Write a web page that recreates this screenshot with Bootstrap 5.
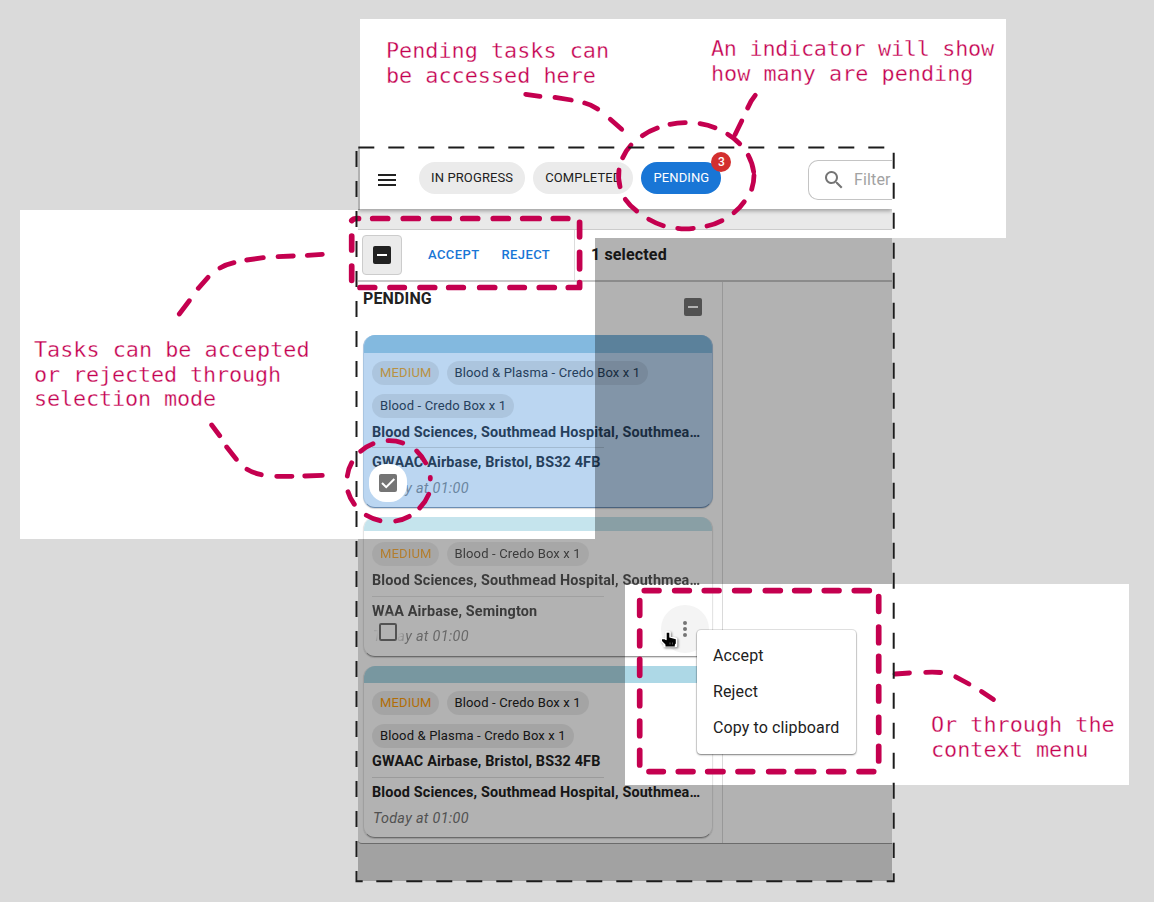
<!DOCTYPE html>
<html lang="en">
<head>
<meta charset="utf-8">
<title>Pending tasks guide</title>
<link rel="stylesheet" href="https://cdn.jsdelivr.net/npm/bootstrap@5.3.0/dist/css/bootstrap.min.css">
<style>
  body { margin: 0; background: #dadada; font-family: Roboto, sans-serif; color: #212121; overflow: hidden; }
  .canvas { width: 1154px; height: 902px; }
  .spot { position: absolute; background: #fff; }
  .spot-top { left: 360px; top: 19px; width: 646px; height: 219px; }
  .spot-left { left: 20px; top: 210px; width: 575px; height: 329px; }
  .spot-menu { left: 625px; top: 584px; width: 504px; height: 201px; }
  .callout { position: absolute; margin: 0; color: #c4004f; font: 21.8px/24.6px "DejaVu Sans Mono", monospace; white-space: pre; -webkit-text-stroke: .3px #fff; }
  .tight { letter-spacing: -.27px; }
  .snug { letter-spacing: -.12px; }
  .app { position: absolute; isolation: isolate; left: 358px; top: 148px; width: 534px; height: 733px; background: #e9e9e9; }
  .appbar { height: 61px; padding-left: 19px; box-shadow: 0 2px 4px rgba(0,0,0,.32); z-index: 1; flex: none; }
  .pill { height: 32px; border-radius: 16px; background: #ebebeb; font-size: 13px; padding: 0 12px; letter-spacing: .12px; }
  .pill.on { background: #1976d6; color: #fff; }
  .count { position: absolute; right: -10px; top: -10px; width: 20px; height: 20px; border-radius: 50%; background: #d32f2f; font-size: 12px; font-weight: 500; letter-spacing: 0; }
  .filter { width: 84px; height: 40px; margin-top: 2px; padding-left: 13px; gap: 8px; border: 1px solid #c4c4c4; border-right: 0; border-radius: 10px 0 0 10px; color: #a2a2a2; font-size: 16px; letter-spacing: .15px; }
  .toolbar { height: 53px; margin-top: 20px; border-top: 1px solid #ccc; border-bottom: 2px solid #c8c8c8; flex: none; }
  .selectbox { width: 40px; height: 40px; margin-left: 4px; border: 1px solid #ccc; border-radius: 4px; background: #ebebeb; }
  .acts { width: 173px; gap: 22px; padding-left: 26px; border-right: 1px solid #dcdcdc; }
  .act { color: #1976d6; font-size: 13px; font-weight: 500; letter-spacing: .4px; }
  .board { height: 562px; border-bottom: 1px solid #9a9a9a; border-radius: 0 0 0 4px; flex: none; }
  .lane { width: 365px; border-right: 1px solid #dadada; padding-left: 5px; }
  .lanehead { height: 53px; padding: 5px 20px 0 0; }
  .task { width: 350px; border: 1px solid #e4e4e4; border-top: 0; border-bottom: 1px solid #999; border-radius: 12px; padding: 0 8px; box-shadow: 0 1px 1px rgba(0,0,0,.16); overflow: hidden; }
  .task + .task { margin-top: 9px; }
  .band { margin: 0 -9px 8px; height: 18px; background: #add8e6; }
  .tag { height: 24px; border-radius: 12px; background: rgba(0,0,0,.08); font-size: 13px; padding: 0 8px; letter-spacing: .15px; white-space: nowrap; }
  .medium { color: #ff9d0a; padding-right: 7px; }
  .place { font-size: 14.4px; font-weight: 700; line-height: 20px; margin-top: 4px; letter-spacing: .14px; white-space: nowrap; position: relative; top: 1px; }
  .rule { width: 232px; height: 1px; background: rgba(0,0,0,.13); margin: 5px 0 1px; }
  .when { font-size: 14.4px; font-style: italic; line-height: 20px; color: #757575; margin: 7px 0 0 1px; letter-spacing: .3px; }
  .t1 { height: 173px; background: #bbd6f1; color: #26405c; border-color: #a9c5e1; border-bottom-color: #6b8db3; }
  .t1 .band { background: #83b9df; }
  .t1 .medium { color: #b99143; }
  .t1 .when { color: #6a859f; }
  .t2 { height: 140px; }
  .t2 > * { opacity: .76; }
  .t2 .band { height: 14px; margin-bottom: 11px; opacity: .7; }
  .t2 .rule { margin: 6px 0 2px; }
  .t2 .when { margin-top: 6px; }
  .t3 { height: 172px; }
  .t3 .band { height: 17px; }
  .t3 .rule { margin: 6px 0 1px; }
  .shade { position: absolute; inset: 0; z-index: 2; background: rgba(0,0,0,.3);
    clip-path: polygon(0 0, 2px 0, 2px 62px, 0 62px, 0 391px, 237px 391px, 237px 90px, 100% 90px, 100% 436px, 267px 436px, 267px 637px, 100% 637px, 100% 100%, 0 100%); }
  .pick { position: absolute; left: 369px; width: 38px; height: 38px; }
  .pick1 { top: 464px; background: #fff; border-radius: 17px; }
  .pick2 { top: 613px; background: radial-gradient(circle, #b2b2b2 35%, rgba(178,178,178,.6) 58%, rgba(178,178,178,0) 72%); }
  .more { position: absolute; left: 661px; top: 605px; width: 48px; height: 48px; border-radius: 50%; background: #f4f4f4; }
  .ctx { position: absolute; left: 697px; top: 630px; width: 159px; height: 124px; border-radius: 4px; background: #fff; padding: 8px 16px; font-size: 16px; line-height: 36px; letter-spacing: .12px; box-shadow: 0 0 0 1px rgba(0,0,0,.1), 0 1px 2px rgba(0,0,0,.45); white-space: nowrap; }
  .marks { position: absolute; left: 0; top: 0; }
</style>
</head>
<body>
<main class="canvas position-relative overflow-hidden">
  <div class="spot spot-top"></div><div class="spot spot-left"></div><div class="spot spot-menu"></div>

  <section class="app d-flex flex-column overflow-hidden">
    <header class="appbar bg-white d-flex align-items-center">
      <svg width="20" height="14" viewBox="0 0 20 14" class="mt-1 flex-shrink-0"><path d="M1 1h18M1 6h18M1 11h18" stroke="#212121" stroke-width="2"/></svg>
      <nav class="d-flex gap-2" style="margin:0 0 2px 22px">
        <span class="pill d-flex align-items-center text-nowrap">IN PROGRESS</span>
        <span class="pill d-flex align-items-center">COMPLETED</span>
        <span class="pill on position-relative d-flex align-items-center">PENDING<b class="count d-flex align-items-center justify-content-center">3</b></span>
      </nav>
      <div class="filter d-flex align-items-center flex-shrink-0 ms-auto">
        <svg width="24" height="24" viewBox="0 0 24 24" class="flex-shrink-0" fill="#757575"><path d="M15.5 14h-.79l-.28-.27A6.5 6.5 0 1 0 13.73 14.43l.27.28v.79l5 4.99L20.49 19zM9.5 14a4.5 4.5 0 1 1 0-9 4.5 4.5 0 0 1 0 9z"/></svg>
        <span>Filter</span>
      </div>
    </header>
    <div class="toolbar bg-white d-flex align-items-center">
      <div class="selectbox d-flex align-items-center justify-content-center"><svg width="24" height="24"><rect x="3" y="3" width="18" height="18" rx="2" fill="#212121"/><path d="M7 12h10" stroke="#fff" stroke-width="2"/></svg></div>
      <div class="acts d-flex align-items-center h-100"><span class="act">ACCEPT</span><span class="act">REJECT</span></div>
      <b class="ps-3" style="letter-spacing:.15px">1 selected</b>
    </div>
    <div class="board bg-white">
      <div class="lane h-100">
        <div class="lanehead d-flex justify-content-between">
          <b style="letter-spacing:.15px">PENDING</b>
          <svg width="18" height="18" style="margin-top:11px"><rect width="18" height="18" rx="2" fill="#757575"/><path d="M4 9h10" stroke="#fff" stroke-width="2"/></svg>
        </div>
        <article class="task t1">
          <div class="band"></div>
          <div class="d-flex flex-wrap" style="gap:9px 8px"><span class="tag medium d-flex align-items-center">MEDIUM</span><span class="tag d-flex align-items-center">Blood &amp; Plasma - Credo Box x 1</span><span class="tag d-flex align-items-center">Blood - Credo Box x 1</span></div>
          <div class="place">Blood Sciences, Southmead Hospital, Southmea…</div>
          <div class="rule"></div>
          <div class="place">GWAAC Airbase, Bristol, BS32 4FB</div>
          <div class="when">Today at 01:00</div>
        </article>
        <article class="task t2">
          <div class="band"></div>
          <div class="d-flex flex-wrap gap-2"><span class="tag medium d-flex align-items-center">MEDIUM</span><span class="tag d-flex align-items-center">Blood - Credo Box x 1</span></div>
          <div class="place">Blood Sciences, Southmead Hospital, Southmea…</div>
          <div class="rule"></div>
          <div class="place">WAA Airbase, Semington</div>
          <div class="when">Today at 01:00</div>
        </article>
        <article class="task t3">
          <div class="band"></div>
          <div class="d-flex flex-wrap" style="gap:9px 8px"><span class="tag medium d-flex align-items-center">MEDIUM</span><span class="tag d-flex align-items-center">Blood - Credo Box x 1</span><span class="tag d-flex align-items-center">Blood &amp; Plasma - Credo Box x 1</span></div>
          <div class="place" style="margin-top:3px">GWAAC Airbase, Bristol, BS32 4FB</div>
          <div class="rule"></div>
          <div class="place">Blood Sciences, Southmead Hospital, Southmea…</div>
          <div class="when">Today at 01:00</div>
        </article>
      </div>
    </div>
    <div class="shade"></div>
  </section>

  <!-- selection checkboxes that float over the cards -->
  <div class="pick pick1 d-flex align-items-center justify-content-center"><svg width="18" height="18"><rect width="18" height="18" rx="2" fill="#757575"/><path d="M3 9l4.2 4.2L15.3 5" fill="none" stroke="#fff" stroke-width="2"/></svg></div>
  <div class="pick pick2 d-flex align-items-center justify-content-center"><svg width="18" height="18"><rect x="1" y="1" width="16" height="16" rx="1.2" fill="#b2b2b2" stroke="#525252" stroke-width="2"/></svg></div>

  <div class="more"><svg width="48" height="48" fill="#757575"><circle cx="24" cy="18" r="2"/><circle cx="24" cy="24" r="2"/><circle cx="24" cy="30" r="2"/></svg></div>
  <div class="ctx"><div>Accept</div><div>Reject</div><div>Copy to clipboard</div></div>

  <svg class="marks" width="1154" height="902" fill="none">
    <!-- hand cursor -->
    <path d="M666.500 632.500h3v4.500l6.500 2v7h-11.500v-2.500l-2.500-2.500v-2h4.500z" fill="#000" stroke="#fff" stroke-width="2.600" stroke-linejoin="round" style="filter:drop-shadow(1px 1px 1px rgba(0,0,0,.5))"/>
    <path d="M666.700 632.700h2.600v4.800l6.500 1.700v4.300l-1 1v2h-9.300v-2l-3.500-3.500v-1.800h2.500l2.200 1.500z" fill="#000"/>
    <path d="M670 642.500v2M672.500 642.500v2" stroke="#777" stroke-width=".7"/>

    <g stroke="#c4004f" stroke-width="4.8" stroke-linecap="round">
      <path d="M525.700 94.300L540 96.300M555 97.300L571.300 100M584.700 103Q592 104.800 597.700 109M610.300 119.300L621.700 129.300"/>
      <path d="M755.300 95.300Q750.500 101 747.700 108M741.700 121L735 134.700"/>
      <path d="M642.300 135.700Q649 131 657.300 128M670 124.300Q677 122.800 685.300 122.700M700 123.700Q708 125 715 127.700M727.700 134.300Q734 138 739.700 143.700M748.300 155.300Q752.500 163 753.700 172M754 175.300Q754 182 751.700 189.300M744.300 201.700Q740 208 734 212.700M722 220.700Q715 224.500 707 226M693.300 228.300Q685 229.400 677.700 228.300M663.300 225.700Q655.500 223.300 648.700 219.300M636.700 211Q630 206 625.300 199.300M620 186.700Q617.800 178 619 170M622.700 157.700Q625.500 151 631 145"/>
      <path d="M360.700 451.300Q366 446.300 373 443.700M388 440.700Q396 440.500 402.700 443M416.700 451Q422 456 425.700 463M430.300 477.300V479M428.700 494.300Q425.500 502 419.700 508M409.300 516.300Q403 519.800 395.700 521M380 520.700Q372.500 519 366.300 515.300M354.300 504.300Q350 498.500 348 491.700M347.300 476Q348 469 351.700 462.700"/>
      <path d="M179.300 314L189.300 300.700M198.300 288.300L208 277.300M220 268Q226 264.500 234 262.700M246.700 260L263.300 257.700M278 256.700L293.300 256M307.300 255.300L322.300 254.300"/>
      <path d="M211.700 425L219.700 435.700M226.700 447L236.300 459.300M247 469.300Q253 473 261.300 474.700M276.700 476.300H292M304.700 476L322.300 475.300"/>
      <path d="M895 674L909.500 673M925.700 672.300Q933 671.700 940.700 672.500M955.700 676.800L969 684M981.500 691.500L993.500 699.500"/>
    </g>
    <g stroke="#c4004f" stroke-width="5.700" stroke-linecap="round" stroke-linejoin="round">
      <path d="M351.800 220.500Q353 218.500 358.500 218.500M372.700 218.500h15M403.300 218.500h15M433.300 218.500h16M462.700 218.500h15M493.300 218.500h15M522.700 218.500h16.500M553.300 218.500h14.500"/>
      <path d="M579.600 222.300v14.500M579.600 252.300v16.500M579.600 282.500v5h-11.300"/>
      <path d="M360 287.500h14.700M390 287.500h14.300M420 287.500h14.700M448.700 287.500h14.600M479.700 287.500h15M510 287.500h14.300M539.300 287.500h15M351.700 236v14M351.700 266v14.300"/>
      <path d="M644.300 590.600H659M674.700 590.600h14.600M704.300 590.600H719M734.700 590.600h14.600M765.300 590.600h15M794.700 590.600h14.600M824.300 590.600H839M854.300 590.600h15"/>
      <path d="M639.700 600.700v14.600M639.700 631v14.700M639.700 659.300v16M639.700 691v14.700M639.700 721v14.700M639.700 750.300V765"/>
      <path d="M878.700 596.700v14.600M878.700 627v15.700M878.700 656.300V671M878.700 686.700V701M878.700 717.300v15M878.700 746.300V761"/>
      <path d="M649 771.600h14.300M678.300 771.600H693M707.700 771.600H723M738 771.600h14.700M768.700 771.600h15M797.300 771.600h16.400M828.700 771.600h15M859 771.600h14.700"/>
    </g>
    <g stroke="#1c1c1c" stroke-width="2">
      <path d="M358.300 147.500H885" stroke-dasharray="16 14"/>
      <path d="M893.700 152.700V858" stroke-dasharray="16 14"/>
      <path d="M356.500 151V858" stroke-dasharray="16 14"/>
      <path d="M376.300 881.300H875" stroke-dasharray="16 14"/>
      <path d="M356.500 871v10.300h6.200M893.700 873.300v8h-7"/>
    </g>
  </svg>

  <p class="callout" style="left:386px;top:39px">Pending tasks can
be accessed here</p>
  <p class="callout" style="left:711px;top:37px"><span class="tight">An indicator will show</span>
how many are pending</p>
  <p class="callout" style="left:34px;top:338px">Tasks can be accepted
<span class="snug">or rejected through</span>
<span class="snug">selection mode</span></p>
  <p class="callout" style="left:931px;top:713px">Or through the
context menu</p>
</main>
<script src="https://cdn.jsdelivr.net/npm/bootstrap@5.3.0/dist/js/bootstrap.bundle.min.js"></script>
</body>
</html>
